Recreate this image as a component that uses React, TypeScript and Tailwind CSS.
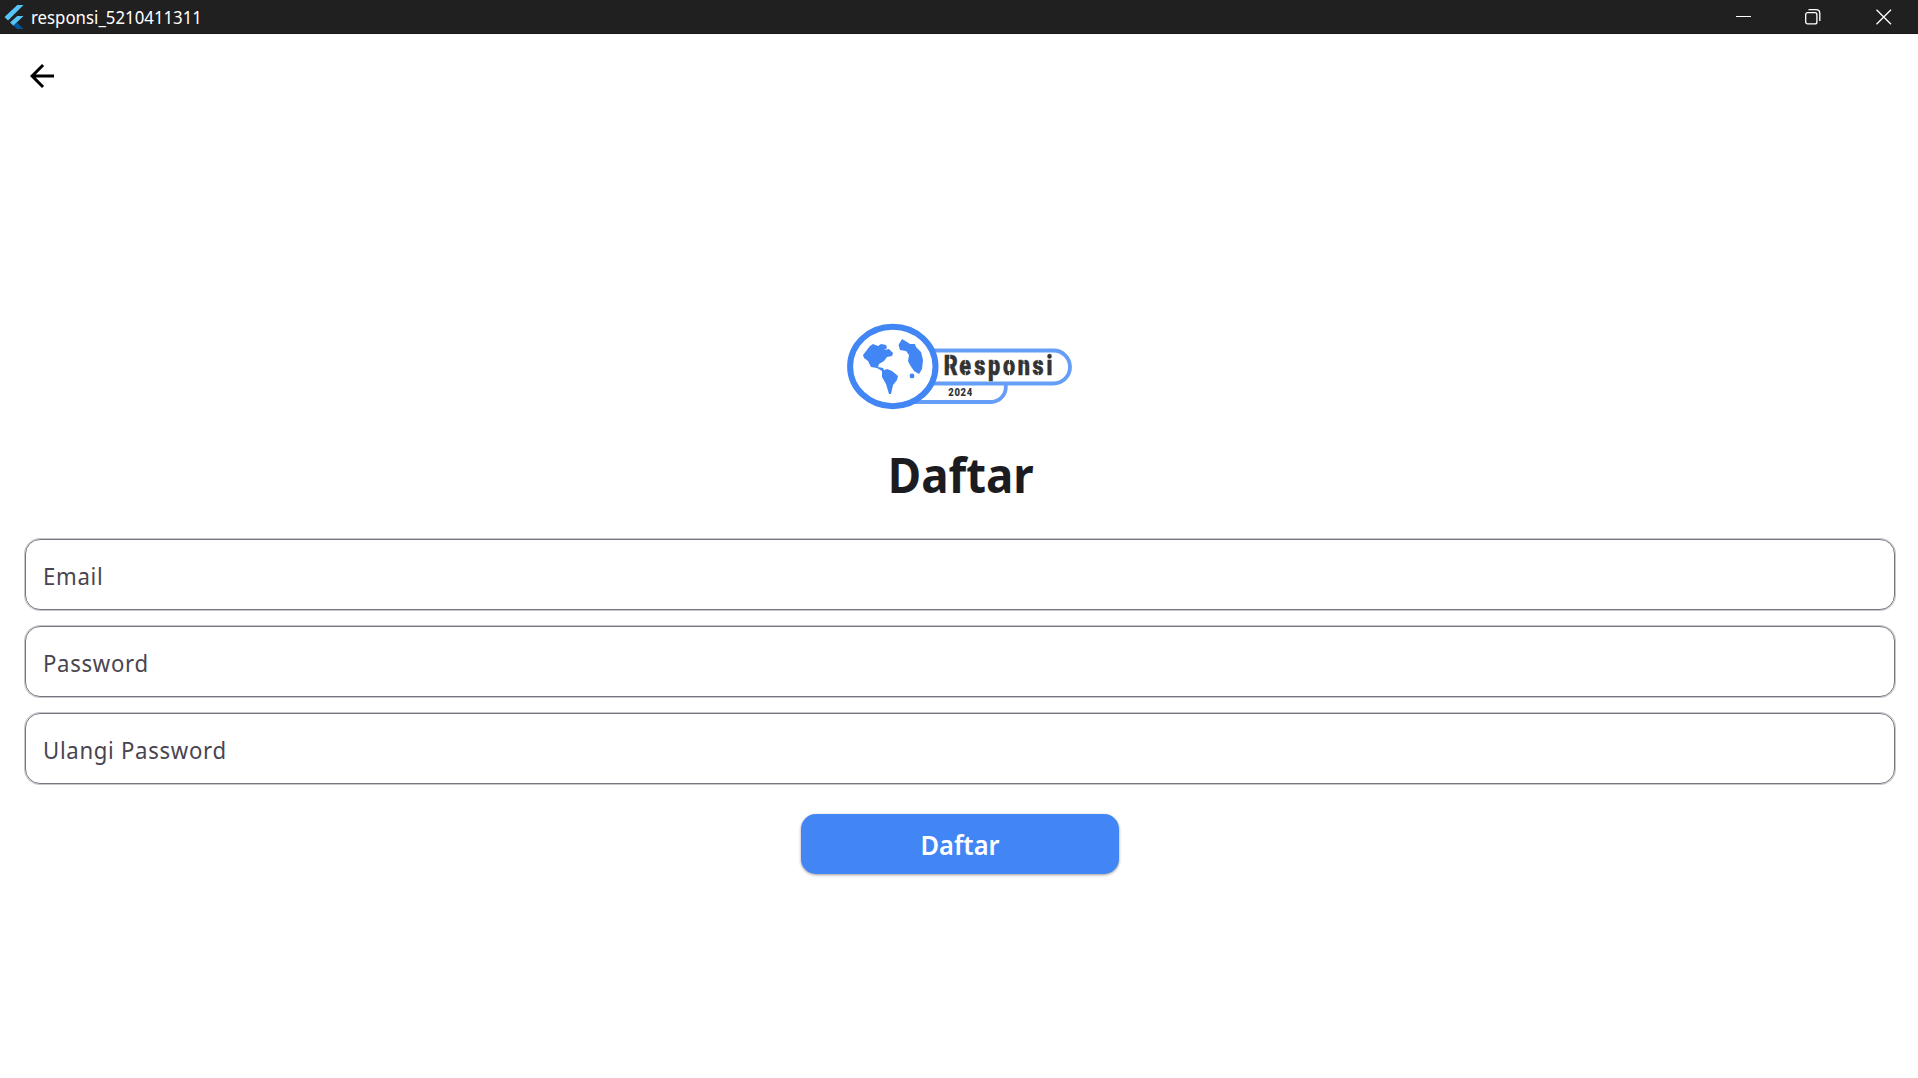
import React from "react";

const FlutterLogo = () => (
  <svg className="ml-1 h-[26px] w-5 shrink-0" viewBox="0 0 20 26">
    <path d="M13.300 1H19.500L4 16.500.5 13z" fill="#55c5f8" />
    <path d="M13.300 12H19.500L12.700 18.500 9.500 21.700 6 18.500z" fill="#54c5f8" />
    <path d="M9.500 21.700 12.700 18.500 19.500 25h-6.200z" fill="#01579b" />
  </svg>
);

const Logo = () => (
  <svg className="h-[88px] w-[228px]" viewBox="846 323 228 88" role="img" aria-label="Responsi 2024">
    <path d="M900 350.500h153.500a16.500 16.500 0 0 1 0 33H900" fill="#fff" stroke="#669df6" strokeWidth="3.800" />
    <path d="M900 402H991a15 15 0 0 0 14.700-17" fill="none" stroke="#669df6" strokeWidth="3.800" />
    <ellipse cx="892.800" cy="366.500" rx="42.700" ry="39.700" fill="#fff" stroke="#4285f4" strokeWidth="6" />
    <g fill="#4285f4">
      <path d="M863 355l7-9 3-2 5 2 3-2 5 1 1 3-3 2 5-1 4 4-1 3-5 1-3 4-5 3-1 3 5 1 2 4-3-1-5-3-6-1-3-6-4-3z" />
      <path d="M882 371l5-2 5 2 6 5-1 4-4 5-2 9h-2l-3-10-4-7z" />
      <path d="M898.500 345l3.500-6 5 3 3 2h5l1 3 5 5 2 8-1 9-3 5-5-3-4-6-2-4 1-6-3-4-6-1z" />
      <circle cx="912" cy="376" r="2.400" />
    </g>
    <text
      transform="scale(.8 1)"
      x="1179.600 1199.200 1217.800 1235 1253.800 1272.300 1290.600 1308"
      y="375"
      fontFamily="Roboto, sans-serif"
      fontWeight="900"
      fontSize="27"
      fill="#333"
      stroke="#333"
      strokeWidth=".5"
    >
      Responsi
    </text>
    <path
      d="M949.800 355v21M965.300 359v4M965.300 372v4M980 359v3M980 373v3M994 359v4M1009.500 359v4M1009.500 372v4M1024 359v4M1038.300 359v3M1038.300 373v3"
      stroke="#fff"
      strokeWidth=".8"
    />
    <text
      transform="scale(.9 1)"
      x="1053.500 1060.500 1067.300 1074.200"
      y="396"
      fontFamily="Roboto, sans-serif"
      fontWeight="900"
      fontSize="10.500"
      fill="#333"
    >
      2024
    </text>
  </svg>
);

const Field = ({ label }: { label: string }) => (
  <label className="flex h-[71px] items-center rounded-[15px] border border-[#79747e] pt-0.5 pl-[17px] text-2xl tracking-[0.75px] text-[#49454f] shadow-[0_0_0_1px_rgba(121,116,126,0.4)]">
    <span className="origin-left scale-x-[.923]">{label}</span>
  </label>
);

export default function App() {
  return (
    <div className="flex h-[1078px] w-[1918px] flex-col overflow-hidden bg-white font-['Noto_Sans',sans-serif]">
      <header className="flex h-[34px] shrink-0 items-center justify-between border-b border-[#1a1718] bg-[#202020] text-white">
        <div className="flex items-center">
          <FlutterLogo />
          <span className="mt-0.5 ml-[7px] origin-left scale-x-[.96] text-[17.500px] leading-none">responsi_5210411311</span>
        </div>
        <div className="mr-[26px] flex items-center">
          <svg className="h-4 w-4" viewBox="0 0 16 16"><path d="M0 7.500h15" stroke="#fff" /></svg>
          <svg className="ml-[53px] h-4 w-4" viewBox="0 0 16 16" fill="none" stroke="#fff" strokeWidth="1.300"><rect x=".7" y="3.700" width="11.200" height="11.200" rx="2" /><path d="M3.500.7H11Q14.800.7 14.800 4.500v7.500" /></svg>
          <svg className="ml-[55px] h-4 w-4" viewBox="0 0 16 16"><path d="m.5.7 14.500 14.500M15 .7.5 15.200" stroke="#fff" strokeWidth="1.300" /></svg>
        </div>
      </header>
      <div className="flex h-[84px] shrink-0 items-center pl-6">
        <svg className="h-9 w-9" viewBox="0 0 24 24"><path d="M20 11H7.830l5.590-5.590L12 4l-8 8 8 8 1.410-1.410L7.830 13H20z" fill="#000" /></svg>
      </div>
      <main className="flex flex-col items-center pt-[205px] pr-[22px] pl-6">
        <Logo />
        <h1 className="mt-[30px] ml-px scale-x-[.95] text-5xl leading-[68px] font-bold text-[#1c1b1f]">Daftar</h1>
        <div className="mt-[30px] flex w-full flex-col gap-4 px-px">
          <Field label="Email" />
          <Field label="Password" />
          <Field label="Ulangi Password" />
        </div>
        <button className="mt-[30px] h-[60px] w-[318px] rounded-[15px] bg-[#4285f4] pt-0.5 text-[27px] font-semibold text-white shadow-[0_1px_3px_rgba(0,0,0,0.4)]">
          <span className="inline-block scale-x-[.94]">Daftar</span>
        </button>
      </main>
    </div>
  );
}
